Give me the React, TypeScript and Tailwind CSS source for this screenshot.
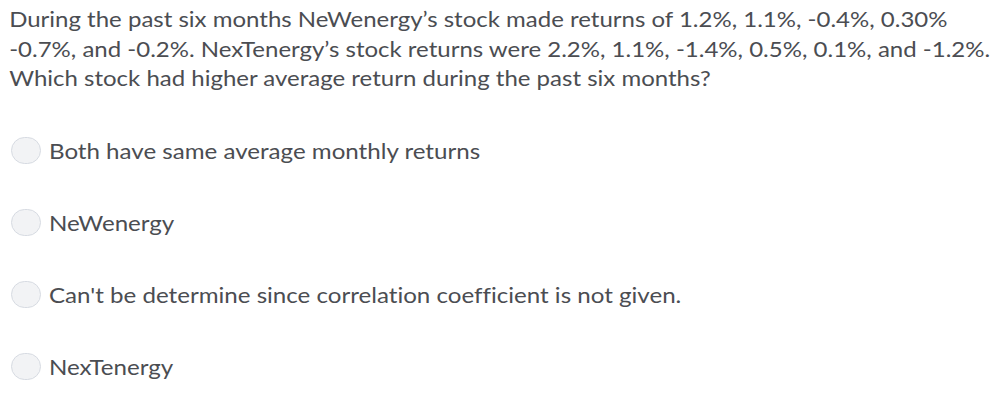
const options = [
  "Both have same average monthly returns",
  "NeWenergy",
  "Can't be determine since correlation coefficient is not given.",
  "NexTenergy",
];

export default function App() {
  return (
    <div
      className="h-[402px] w-[1007px] overflow-hidden bg-white text-[#4b4d52] [font-variant-ligatures:none]"
      style={{ fontFamily: "Lato, 'Noto Sans', sans-serif" }}
    >
      <p className="origin-left scale-x-[1.143] whitespace-nowrap pl-[8px] pt-[4px] text-[21px] leading-[29.5px]">
        During the past six months NeWenergy’s stock made returns of 1.2%, 1.1%, -0.4%, 0.30%
        <br />
        -0.7%, and -0.2%. NexTenergy’s stock returns were 2.2%, 1.1%, -1.4%, 0.5%, 0.1%, and -1.2%.
        <br />
        Which stock had higher average return during the past six months?
      </p>
      <div className="mt-[44px] flex flex-col gap-[44px] pl-[11px]">
        {options.map((o) => (
          <label key={o} className="flex h-[28px] items-center gap-[8px]">
            <span className="h-[27px] w-[30px] shrink-0 rounded-full border border-[#d7dbe2] bg-[#f2f3f5]" />
            <span className="origin-left scale-x-[1.148] whitespace-nowrap text-[21px]">{o}</span>
          </label>
        ))}
      </div>
    </div>
  );
}
